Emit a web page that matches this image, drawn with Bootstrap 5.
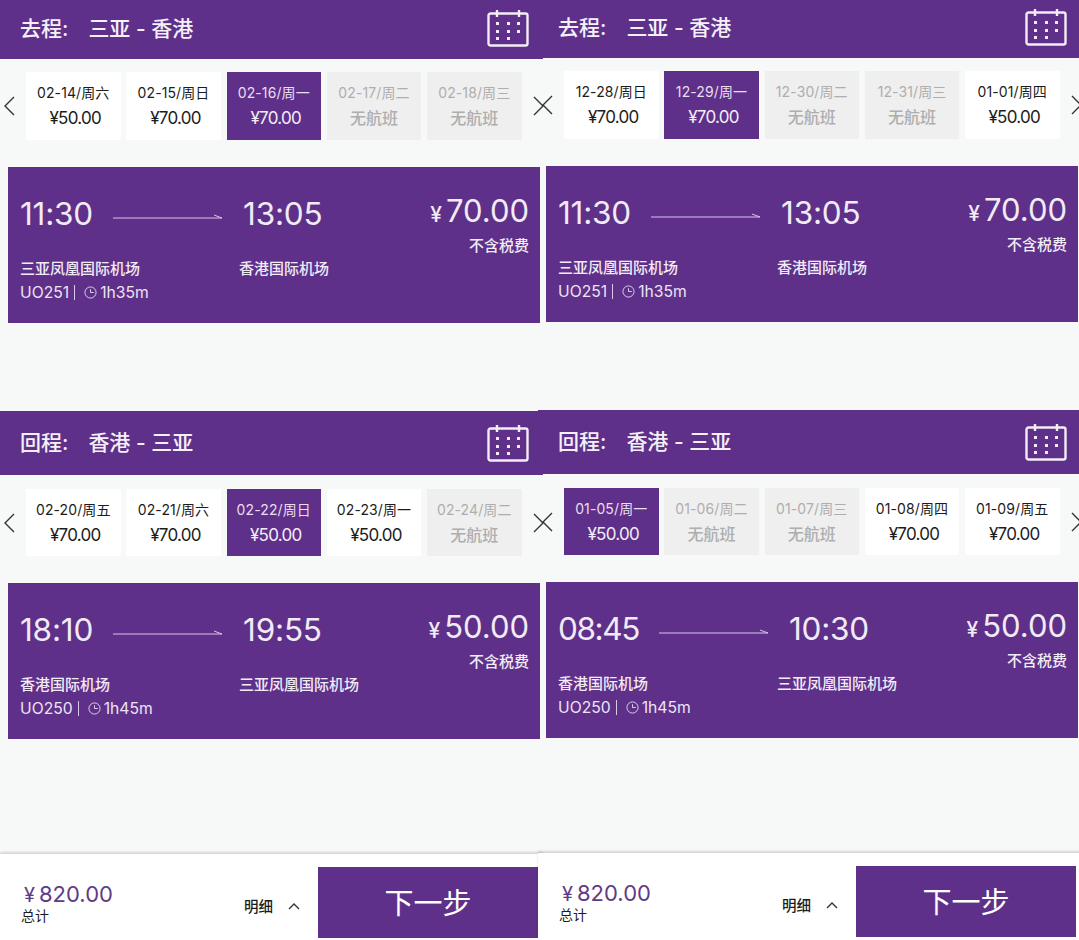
<!DOCTYPE html>
<html lang="zh-CN"><head><meta charset="utf-8"><title>选择航班</title>
<link href="https://cdn.jsdelivr.net/npm/bootstrap@5.3.0/dist/css/bootstrap.min.css" rel="stylesheet">
<style>
html,body{height:940px;overflow:hidden;background:#f7f8f8}
body{width:1079px;font-family:Inter,"Noto Sans CJK SC",sans-serif;color:#1c1c1c}
.pane{width:538px;height:940px;flex:0 0 538px}
.pane-b{margin-top:-1px;height:941px}
.head-bar{height:59px;margin-right:-5px;background:#5f3089;color:#f5f0f8;padding:0 14px 0 20px;font-size:21px;font-weight:500;position:relative;z-index:1}
.pane-b .head-bar{z-index:0}
.head-bar.second{margin-top:88px;height:64px}
.head-bar svg{margin-top:-4px}
.head-bar span{margin-top:-2px}
.head-bar.second svg,.head-bar.second span{margin-top:0}
.head-label{margin-right:20px}
.date-row{margin-top:13px;height:68px;padding-left:3px;gap:5.75px}
.date-row.second{margin-top:14px;height:67px}
.chev{flex:0 0 12px;width:12px;height:20px}
.chev-l{margin-right:5.25px}
.chev-r{margin-left:6px}
.tile{flex:0 0 94.5px;background:#fff;text-align:center;font-size:14px;letter-spacing:.1px;line-height:20px;padding-top:11px}
.tile b{display:block;font-weight:400;font-size:17px;letter-spacing:-.7px;line-height:26px;margin-top:2px;padding-left:4px}
.tile.on{background:#5f3089;color:#e9dff0}
.tile.on b{color:#f3edf7}
.tile.off{background:#efefef;color:#aeaeae}
.tile.off b{font-size:16px;letter-spacing:0;font-weight:500;padding-left:0}
.fare-card{margin:27px -2px 0 8px;height:156px;background:#5f3089;color:#f1ebf5;padding:27px 11px 0 12px}
.fare-main{flex:1 1 auto;min-width:0}
.time-row{height:40px}
.time-big{font-size:31.5px;line-height:40px;font-weight:400;letter-spacing:-.2px}
.time-big.tight{letter-spacing:-1.4px}
.flight-arrow{margin:4px 20px 0 20px;width:110px;height:8px}
.airport-row{margin-top:25px}
.airport{flex:0 0 219px;font-size:15px;font-weight:500;line-height:20px}
.meta{font-size:15.7px;line-height:20px;margin-top:4px;color:#ece4f2}
.divider{display:inline-block;width:1px;height:15px;background:#d9c9e4;margin:0 9px 0 5px;vertical-align:-2px}
.clock{width:13px;height:13px;margin-right:3px;vertical-align:-1px}
.fare-price{text-align:right}
.price-num{font-size:31px;line-height:34px;font-weight:400}
.price-num small{font-size:21px;margin-right:4px;font-weight:500}
.tax{font-size:15px;font-weight:500;line-height:20px;margin-top:4px}
.foot-bar{margin-top:115px;margin-right:-5px;background:#fff;box-shadow:0 -2px 2px rgba(0,0,0,.14);padding:13px 5px 0 21px;flex:1 1 auto;align-items:flex-start}
.sum-col{flex:1 1 auto;padding-top:12px}
.sum-val{font-size:22px;line-height:30px;color:#5f3b87;padding-left:3px}
.sum-val small{font-size:20px;margin-right:4px}
.sum-lbl{font-size:14px;line-height:16px;margin-top:-2px}
.detail{font-size:14.5px;font-weight:500;margin-top:30px;margin-right:18px;line-height:20px}
.detail svg{margin-left:15px;vertical-align:2px}
.next-btn{width:220px;height:71px;background:#5f3089;color:#fff;border:0;border-radius:0;font-size:29px;padding:3px 0 0}
.next-btn:hover{background:#5f3089;color:#fff}
</style></head>
<body>
<div class="d-flex">

<!-- ========== 左 ========== -->
<section class="pane d-flex flex-column">
  <div class="head-bar d-flex align-items-center">
    <span class="head-label">去程:</span><span class="flex-grow-1">三亚 - 香港</span>
    <svg width="42" height="38" viewBox="0 0 42 38" fill="none" stroke="#f3edf7" stroke-width="2.4"><rect x="1.5" y="4.5" width="39" height="32" rx="2"/><path d="M10 1v7M32 1v7"/><g fill="#f3edf7" stroke="none"><rect x="9" y="13" width="3" height="3"/><rect x="20" y="13" width="3" height="3"/><rect x="30" y="13" width="3" height="3"/><rect x="9" y="21" width="3" height="3"/><rect x="20" y="21" width="3" height="3"/><rect x="30" y="21" width="3" height="3"/><rect x="9" y="28" width="3" height="3"/><rect x="20" y="28" width="3" height="3"/></g></svg>
  </div>
  <div class="date-row d-flex align-items-stretch">
    <svg class="chev chev-l align-self-center" viewBox="0 0 12 20" fill="none" stroke="#333" stroke-width="1.4"><path d="M11 1 2 10l9 9"/></svg>
    <div class="tile">02-14/周六<b>¥50.00</b></div>
    <div class="tile">02-15/周日<b>¥70.00</b></div>
    <div class="tile on">02-16/周一<b>¥70.00</b></div>
    <div class="tile off">02-17/周二<b>无航班</b></div>
    <div class="tile off">02-18/周三<b>无航班</b></div>
    <svg class="chev chev-r align-self-center" viewBox="0 0 12 20" fill="none" stroke="#333" stroke-width="1.4"><path d="m1 1 9 9-9 9"/></svg>
  </div>
  <div class="fare-card d-flex">
    <div class="fare-main">
      <div class="time-row d-flex align-items-center"><span class="time-big">11:30</span><svg class="flight-arrow" viewBox="0 0 110 8" fill="none" stroke="#d9c4e6"><path d="M0 6h109L101 3"/></svg><span class="time-big">13:05</span></div>
      <div class="airport-row d-flex"><div class="airport">三亚凤凰国际机场</div><div class="airport">香港国际机场</div></div>
      <div class="meta">UO251<span class="divider"></span><svg class="clock" viewBox="0 0 14 14" fill="none" stroke="#e6dbee"><circle cx="7" cy="7" r="6"/><path d="M7 3.5V7h3.5"/></svg>1h35m</div>
    </div>
    <div class="fare-price">
      <div class="price-num"><small>¥</small>70.00</div>
      <div class="tax">不含税费</div>
    </div>
  </div>

  <div class="head-bar second d-flex align-items-center">
    <span class="head-label">回程:</span><span class="flex-grow-1">香港 - 三亚</span>
    <svg width="42" height="38" viewBox="0 0 42 38" fill="none" stroke="#f3edf7" stroke-width="2.4"><rect x="1.5" y="4.5" width="39" height="32" rx="2"/><path d="M10 1v7M32 1v7"/><g fill="#f3edf7" stroke="none"><rect x="9" y="13" width="3" height="3"/><rect x="20" y="13" width="3" height="3"/><rect x="30" y="13" width="3" height="3"/><rect x="9" y="21" width="3" height="3"/><rect x="20" y="21" width="3" height="3"/><rect x="30" y="21" width="3" height="3"/><rect x="9" y="28" width="3" height="3"/><rect x="20" y="28" width="3" height="3"/></g></svg>
  </div>
  <div class="date-row second d-flex align-items-stretch">
    <svg class="chev chev-l align-self-center" viewBox="0 0 12 20" fill="none" stroke="#333" stroke-width="1.4"><path d="M11 1 2 10l9 9"/></svg>
    <div class="tile">02-20/周五<b>¥70.00</b></div>
    <div class="tile">02-21/周六<b>¥70.00</b></div>
    <div class="tile on">02-22/周日<b>¥50.00</b></div>
    <div class="tile">02-23/周一<b>¥50.00</b></div>
    <div class="tile off">02-24/周二<b>无航班</b></div>
    <svg class="chev chev-r align-self-center" viewBox="0 0 12 20" fill="none" stroke="#333" stroke-width="1.4"><path d="m1 1 9 9-9 9"/></svg>
  </div>
  <div class="fare-card d-flex">
    <div class="fare-main">
      <div class="time-row d-flex align-items-center"><span class="time-big">18:10</span><svg class="flight-arrow" viewBox="0 0 110 8" fill="none" stroke="#d9c4e6"><path d="M0 6h109L101 3"/></svg><span class="time-big">19:55</span></div>
      <div class="airport-row d-flex"><div class="airport">香港国际机场</div><div class="airport">三亚凤凰国际机场</div></div>
      <div class="meta">UO250<span class="divider"></span><svg class="clock" viewBox="0 0 14 14" fill="none" stroke="#e6dbee"><circle cx="7" cy="7" r="6"/><path d="M7 3.5V7h3.5"/></svg>1h45m</div>
    </div>
    <div class="fare-price">
      <div class="price-num"><small>¥</small>50.00</div>
      <div class="tax">不含税费</div>
    </div>
  </div>

  <div class="foot-bar d-flex">
    <div class="sum-col"><div class="sum-val"><small>¥</small>820.00</div><div class="sum-lbl">总计</div></div>
    <div class="detail">明细<svg width="12" height="8" viewBox="0 0 12 8" fill="none" stroke="#333" stroke-width="1.4"><path d="m1 7 5-5 5 5"/></svg></div>
    <button class="btn next-btn">下一步</button>
  </div>
</section>

<!-- ========== 右 ========== -->
<section class="pane pane-b d-flex flex-column">
  <div class="head-bar d-flex align-items-center">
    <span class="head-label">去程:</span><span class="flex-grow-1">三亚 - 香港</span>
    <svg width="42" height="38" viewBox="0 0 42 38" fill="none" stroke="#f3edf7" stroke-width="2.4"><rect x="1.5" y="4.5" width="39" height="32" rx="2"/><path d="M10 1v7M32 1v7"/><g fill="#f3edf7" stroke="none"><rect x="9" y="13" width="3" height="3"/><rect x="20" y="13" width="3" height="3"/><rect x="30" y="13" width="3" height="3"/><rect x="9" y="21" width="3" height="3"/><rect x="20" y="21" width="3" height="3"/><rect x="30" y="21" width="3" height="3"/><rect x="9" y="28" width="3" height="3"/><rect x="20" y="28" width="3" height="3"/></g></svg>
  </div>
  <div class="date-row d-flex align-items-stretch">
    <svg class="chev chev-l align-self-center" viewBox="0 0 12 20" fill="none" stroke="#333" stroke-width="1.4"><path d="M11 1 2 10l9 9"/></svg>
    <div class="tile">12-28/周日<b>¥70.00</b></div>
    <div class="tile on">12-29/周一<b>¥70.00</b></div>
    <div class="tile off">12-30/周二<b>无航班</b></div>
    <div class="tile off">12-31/周三<b>无航班</b></div>
    <div class="tile">01-01/周四<b>¥50.00</b></div>
    <svg class="chev chev-r align-self-center" viewBox="0 0 12 20" fill="none" stroke="#333" stroke-width="1.4"><path d="m1 1 9 9-9 9"/></svg>
  </div>
  <div class="fare-card d-flex">
    <div class="fare-main">
      <div class="time-row d-flex align-items-center"><span class="time-big">11:30</span><svg class="flight-arrow" viewBox="0 0 110 8" fill="none" stroke="#d9c4e6"><path d="M0 6h109L101 3"/></svg><span class="time-big">13:05</span></div>
      <div class="airport-row d-flex"><div class="airport">三亚凤凰国际机场</div><div class="airport">香港国际机场</div></div>
      <div class="meta">UO251<span class="divider"></span><svg class="clock" viewBox="0 0 14 14" fill="none" stroke="#e6dbee"><circle cx="7" cy="7" r="6"/><path d="M7 3.5V7h3.5"/></svg>1h35m</div>
    </div>
    <div class="fare-price">
      <div class="price-num"><small>¥</small>70.00</div>
      <div class="tax">不含税费</div>
    </div>
  </div>

  <div class="head-bar second d-flex align-items-center">
    <span class="head-label">回程:</span><span class="flex-grow-1">香港 - 三亚</span>
    <svg width="42" height="38" viewBox="0 0 42 38" fill="none" stroke="#f3edf7" stroke-width="2.4"><rect x="1.5" y="4.5" width="39" height="32" rx="2"/><path d="M10 1v7M32 1v7"/><g fill="#f3edf7" stroke="none"><rect x="9" y="13" width="3" height="3"/><rect x="20" y="13" width="3" height="3"/><rect x="30" y="13" width="3" height="3"/><rect x="9" y="21" width="3" height="3"/><rect x="20" y="21" width="3" height="3"/><rect x="30" y="21" width="3" height="3"/><rect x="9" y="28" width="3" height="3"/><rect x="20" y="28" width="3" height="3"/></g></svg>
  </div>
  <div class="date-row second d-flex align-items-stretch">
    <svg class="chev chev-l align-self-center" viewBox="0 0 12 20" fill="none" stroke="#333" stroke-width="1.4"><path d="M11 1 2 10l9 9"/></svg>
    <div class="tile on">01-05/周一<b>¥50.00</b></div>
    <div class="tile off">01-06/周二<b>无航班</b></div>
    <div class="tile off">01-07/周三<b>无航班</b></div>
    <div class="tile">01-08/周四<b>¥70.00</b></div>
    <div class="tile">01-09/周五<b>¥70.00</b></div>
    <svg class="chev chev-r align-self-center" viewBox="0 0 12 20" fill="none" stroke="#333" stroke-width="1.4"><path d="m1 1 9 9-9 9"/></svg>
  </div>
  <div class="fare-card d-flex">
    <div class="fare-main">
      <div class="time-row d-flex align-items-center"><span class="time-big tight">08:45</span><svg class="flight-arrow" viewBox="0 0 110 8" fill="none" stroke="#d9c4e6"><path d="M0 6h109L101 3"/></svg><span class="time-big">10:30</span></div>
      <div class="airport-row d-flex"><div class="airport">香港国际机场</div><div class="airport">三亚凤凰国际机场</div></div>
      <div class="meta">UO250<span class="divider"></span><svg class="clock" viewBox="0 0 14 14" fill="none" stroke="#e6dbee"><circle cx="7" cy="7" r="6"/><path d="M7 3.5V7h3.5"/></svg>1h45m</div>
    </div>
    <div class="fare-price">
      <div class="price-num"><small>¥</small>50.00</div>
      <div class="tax">不含税费</div>
    </div>
  </div>

  <div class="foot-bar d-flex">
    <div class="sum-col"><div class="sum-val"><small>¥</small>820.00</div><div class="sum-lbl">总计</div></div>
    <div class="detail">明细<svg width="12" height="8" viewBox="0 0 12 8" fill="none" stroke="#333" stroke-width="1.4"><path d="m1 7 5-5 5 5"/></svg></div>
    <button class="btn next-btn">下一步</button>
  </div>
</section>

</div>
<script src="https://cdn.jsdelivr.net/npm/bootstrap@5.3.0/dist/js/bootstrap.bundle.min.js"></script>
</body></html>
